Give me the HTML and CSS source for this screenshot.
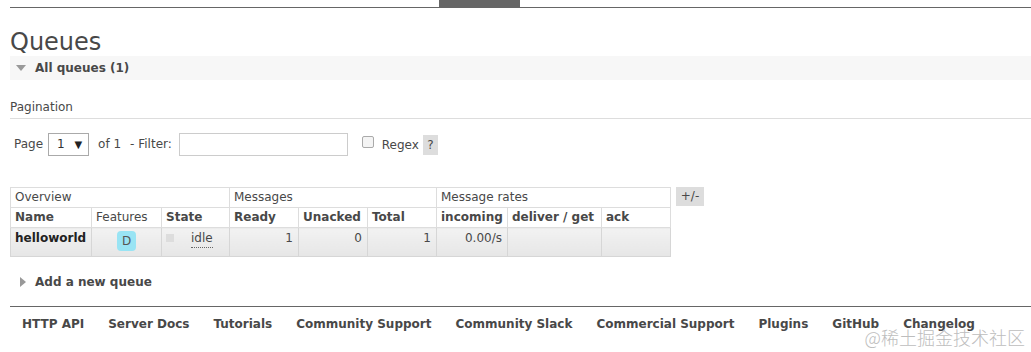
FILE: index.html
```html
<!DOCTYPE html>
<html lang="en">
<head>
    <meta charset="UTF-8">
    <meta name="viewport" content="width=device-width, initial-scale=1.0">
    <title>Queues</title>
    <link rel="stylesheet" href="styles.css">
</head>
<body>
    <div class="topnav">
        <span class="tab-active"></span>
    </div>
    <div class="main">
        <h1>Queues</h1>
        <div class="section-head"><span class="arrow-down"></span>All queues (1)</div>

        <h3 class="pagination-title">Pagination</h3>
        <div class="pagination">
            <span>Page</span>
            <span class="select-box">1 <span class="caret">&#9660;</span></span>
            <span class="of">of 1</span>
            <span>- Filter:</span>
            <span class="filter-input"></span>
            <span class="checkbox"></span>
            <span class="regex">Regex</span>
            <span class="help">?</span>
        </div>

        <div class="table-wrap">
            <table class="queues">
                <tr class="group-row">
                    <th colspan="3">Overview</th>
                    <th colspan="3">Messages</th>
                    <th colspan="3">Message rates</th>
                </tr>
                <tr class="col-row">
                    <th class="c-name">Name</th>
                    <th class="c-feat normal">Features</th>
                    <th class="c-state">State</th>
                    <th class="c-num">Ready</th>
                    <th class="c-num">Unacked</th>
                    <th class="c-num">Total</th>
                    <th class="c-rate">incoming</th>
                    <th class="c-deliver">deliver / get</th>
                    <th class="c-ack">ack</th>
                </tr>
                <tr class="data-row">
                    <td class="name">helloworld</td>
                    <td class="center"><span class="badge">D</span></td>
                    <td><span class="state-box"></span><span class="idle">idle</span></td>
                    <td class="num">1</td>
                    <td class="num">0</td>
                    <td class="num">1</td>
                    <td class="num">0.00/s</td>
                    <td></td>
                    <td></td>
                </tr>
            </table>
            <span class="toggle">+/-</span>
        </div>

        <div class="section-head closed"><span class="arrow-right"></span>Add a new queue</div>
    </div>
    <div class="footer">
        <a href="#">HTTP API</a>
        <a href="#">Server Docs</a>
        <a href="#">Tutorials</a>
        <a href="#">Community Support</a>
        <a href="#">Community Slack</a>
        <a href="#">Commercial Support</a>
        <a href="#">Plugins</a>
        <a href="#">GitHub</a>
        <a href="#">Changelog</a>
    </div>
    <div class="watermark">@稀土掘金技术社区</div>
</body>
</html>
```

FILE: styles.css
```css
body {
    margin: 0;
    padding: 0;
    font-family: Verdana, "DejaVu Sans", sans-serif;
    font-size: 12px;
    color: #484848;
    background-color: #ffffff;
    position: relative;
    height: 352px;
    overflow: hidden;
}
.topnav {
    margin-left: 10px;
    height: 7px;
    border-bottom: 1px solid #666666;
    position: relative;
}
.tab-active {
    position: absolute;
    left: 429px;
    top: 0;
    width: 81px;
    height: 7px;
    background-color: #666666;
}
.main {
    padding-left: 10px;
}
h1 {
    margin: 0;
    padding-top: 20px;
    font-size: 24px;
    font-weight: normal;
    line-height: 28px;
    color: #484848;
}
.section-head {
    background-color: #f7f7f7;
    height: 24px;
    line-height: 24px;
    font-weight: bold;
    padding-left: 25px;
    position: relative;
}
.arrow-down {
    position: absolute;
    left: 6px;
    top: 9px;
    border-left: 5px solid transparent;
    border-right: 5px solid transparent;
    border-top: 6px solid #999999;
}
.section-head.closed {
    background-color: transparent;
    margin-top: 13px;
}
.arrow-right {
    position: absolute;
    left: 10px;
    top: 7px;
    border-top: 5px solid transparent;
    border-bottom: 5px solid transparent;
    border-left: 6px solid #999999;
}
.pagination-title {
    margin: 19px 0 0 0;
    font-size: 12px;
    font-weight: normal;
    line-height: 16px;
    padding-bottom: 3px;
    border-bottom: 1px solid #dddddd;
}
.pagination {
    display: flex;
    align-items: center;
    margin-top: 13px;
    padding-left: 4px;
    height: 24px;
}
.select-box {
    display: inline-block;
    box-sizing: border-box;
    width: 41px;
    height: 23px;
    line-height: 21px;
    border: 1px solid #aaaaaa;
    margin-left: 5px;
    padding-left: 8px;
    color: #333333;
}
.caret {
    font-size: 10px;
    margin-left: 6px;
    color: #222222;
}
.of {
    margin-left: 9px;
    margin-right: 9px;
}
.filter-input {
    display: inline-block;
    box-sizing: border-box;
    width: 169px;
    height: 23px;
    border: 1px solid #cccccc;
    margin-left: 7px;
}
.checkbox {
    display: inline-block;
    box-sizing: border-box;
    width: 12px;
    height: 12px;
    border: 1px solid #aaaaaa;
    border-radius: 2px;
    background-color: #f4f4f4;
    margin-left: 14px;
    margin-top: -4px;
}
.regex {
    margin-left: 8px;
    margin-top: 2px;
}
.help {
    display: inline-block;
    width: 15px;
    height: 20px;
    line-height: 20px;
    text-align: center;
    background-color: #dddddd;
    margin-left: 4px;
    margin-top: 2px;
}
.table-wrap {
    display: flex;
    align-items: flex-start;
    margin-top: 31px;
}
.queues {
    border-collapse: collapse;
    border: 1px solid #dddddd;
}
.queues th,
.queues td {
    border: 1px solid #dddddd;
    padding: 0 4px;
    text-align: left;
    height: 19px;
    line-height: 19px;
}
.group-row th {
    font-weight: normal;
}
.col-row th {
    font-weight: bold;
}
.col-row th.normal {
    font-weight: normal;
}
.c-name { width: 72px; }
.c-feat { width: 61px; }
.c-state { width: 59px; }
.c-num { width: 60px; }
.c-rate { width: 62px; }
.c-deliver { width: 85px; }
.c-ack { width: 60px; }
.queues .data-row td {
    box-sizing: border-box;
    height: 29px;
    vertical-align: top;
    padding-top: 1px;
    background: linear-gradient(#f2f2f2, #e6e6e6);
    border-color: #d6d6d6;
}
.data-row td.name {
    font-weight: bold;
    color: #222222;
}
.queues .data-row td.center {
    text-align: center;
    padding-top: 3px;
}
.data-row td.num {
    text-align: right;
    padding-right: 5px;
}
.badge {
    display: inline-block;
    vertical-align: top;
    width: 19px;
    height: 20px;
    line-height: 20px;
    border-radius: 4px;
    background-color: #99e4f4;
    color: #555555;
}
.state-box {
    display: inline-block;
    width: 8px;
    height: 8px;
    background-color: #dddddd;
    margin-top: 5px;
    vertical-align: top;
}
.idle {
    display: inline-block;
    vertical-align: top;
    margin-left: 17px;
    border-bottom: 1px dotted #666666;
    line-height: 18px;
}
.toggle {
    margin-left: 5px;
    display: inline-block;
    width: 28px;
    height: 19px;
    line-height: 19px;
    text-align: center;
    background-color: #dddddd;
}
.footer {
    margin: 12px 0 0 10px;
    border-top: 1px solid #666666;
    padding: 10px 0 0 12px;
    display: flex;
    gap: 24px;
}
.footer a {
    color: #484848;
    font-weight: bold;
    text-decoration: none;
    line-height: 14px;
}
.watermark {
    position: absolute;
    right: 6px;
    bottom: 5px;
    font-family: "Noto Sans CJK SC", sans-serif;
    font-weight: 300;
    font-size: 18px;
    line-height: 20px;
    color: #bdbdbd;
}
```
